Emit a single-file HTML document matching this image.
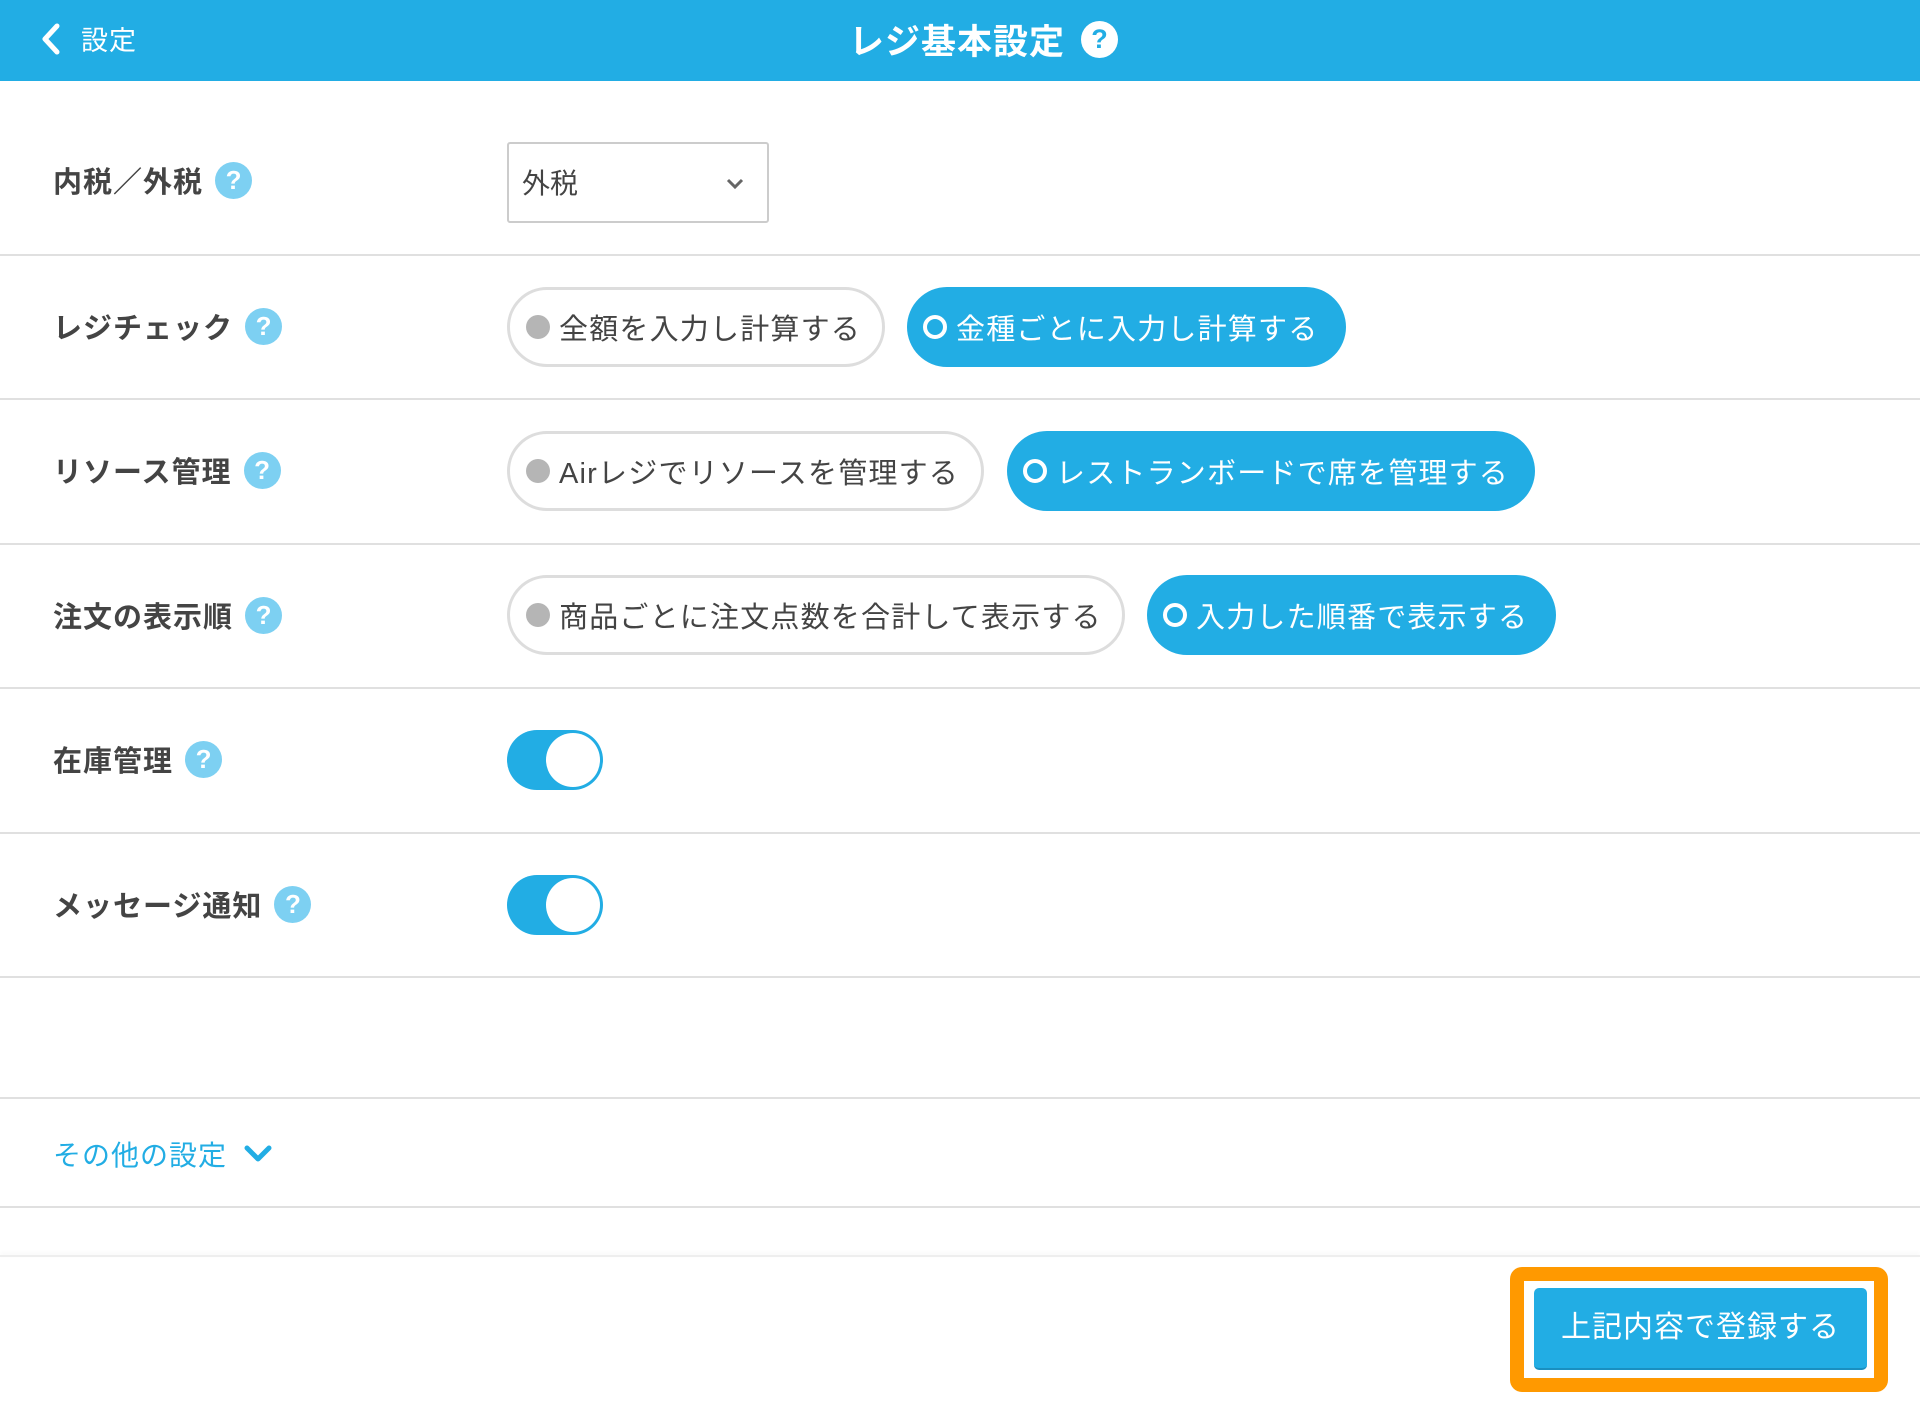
<!DOCTYPE html>
<html><head><meta charset="utf-8"><style>
*{margin:0;padding:0;box-sizing:border-box}
body{width:1920px;height:1401px;background:#fff;font-family:"Liberation Sans","Noto Sans CJK JP",sans-serif;position:relative;overflow:hidden;color:#444}
.hdr{position:absolute;left:0;top:0;width:1920px;height:81px;background:#22ade4;color:#fff}
.row{position:absolute;left:0;width:1920px;border-bottom:2px solid #e0e0e0}
.lbl{position:absolute;left:53px;font-size:29px;font-weight:bold;color:#444;transform:translateY(-50%);display:flex;align-items:center;white-space:nowrap;letter-spacing:1px}
.q{display:inline-block;width:37px;height:37px;border-radius:50%;background:#7dd0f2;color:#fff;font-size:26px;text-align:center;line-height:37px;margin-left:12px;font-weight:bold;letter-spacing:0}
.pill{position:absolute;height:80px;border-radius:40px;font-size:29px;display:flex;align-items:center;padding-left:16px;white-space:nowrap;letter-spacing:1.2px}
.off{border:3px solid #ddd;color:#444;background:#fff}
.on{background:#22ade4;color:#fff}
.dot{width:24px;height:24px;border-radius:50%;margin-right:9px;flex:none}
.off .dot{background:#b5b5b5}
.on .dot{border:4px solid #fff}
.tg{position:absolute;left:507px;width:96px;height:60px;border-radius:30px;background:#22ade4}
.tg::after{content:"";position:absolute;right:3px;top:3px;width:54px;height:54px;border-radius:50%;background:#fff}
</style></head><body>
<div class="hdr">
<svg style="position:absolute;left:40px;top:23px" width="22" height="32" viewBox="0 0 22 32"><path d="M17 3 L5 16 L17 29" stroke="#fff" stroke-width="5" fill="none" stroke-linecap="round" stroke-linejoin="round"/></svg>
<div style="position:absolute;left:81px;top:19px;font-size:27px;letter-spacing:1px">設定</div>
<div style="position:absolute;left:849px;top:14px;font-size:35px;font-weight:bold;display:flex;align-items:center;letter-spacing:1px">レジ基本設定<span style="display:inline-block;width:37px;height:37px;border-radius:50%;background:#fff;color:#22ade4;font-size:27px;line-height:37px;text-align:center;margin-left:16px;letter-spacing:0">?</span></div>
</div>
<div class="row" style="top:81px;height:175px"></div>
<div class="row" style="top:256px;height:144px"></div>
<div class="row" style="top:400px;height:145px"></div>
<div class="row" style="top:545px;height:144px"></div>
<div class="row" style="top:689px;height:145px"></div>
<div class="row" style="top:834px;height:144px"></div>
<div class="row" style="top:978px;height:121px"></div>
<div class="row" style="top:1099px;height:109px"></div>

<div class="lbl" style="top:180px">内税／外税<span class="q">?</span></div>
<div style="position:absolute;left:507px;top:142px;width:262px;height:81px;border:2px solid #ccc;border-radius:3px;font-size:28px;padding:18px 0 0 13px">外税
<svg style="position:absolute;right:22px;top:33px" width="20" height="13" viewBox="0 0 20 13"><path d="M3 3 L10 10 L17 3" stroke="#666" stroke-width="3" fill="none"/></svg></div>

<div class="lbl" style="top:326px">レジチェック<span class="q">?</span></div>
<div class="pill off" style="left:507px;top:287px;width:378px"><span class="dot"></span>全額を入力し計算する</div>
<div class="pill on" style="left:907px;top:287px;width:439px"><span class="dot"></span>金種ごとに入力し計算する</div>

<div class="lbl" style="top:470px">リソース管理<span class="q">?</span></div>
<div class="pill off" style="left:507px;top:431px;width:477px"><span class="dot"></span>Airレジでリソースを管理する</div>
<div class="pill on" style="left:1007px;top:431px;width:528px"><span class="dot"></span>レストランボードで席を管理する</div>

<div class="lbl" style="top:615px">注文の表示順<span class="q">?</span></div>
<div class="pill off" style="left:507px;top:575px;width:618px"><span class="dot"></span>商品ごとに注文点数を合計して表示する</div>
<div class="pill on" style="left:1147px;top:575px;width:409px"><span class="dot"></span>入力した順番で表示する</div>

<div class="lbl" style="top:759px">在庫管理<span class="q">?</span></div>
<div class="tg" style="top:730px"></div>
<div class="lbl" style="top:904px">メッセージ通知<span class="q">?</span></div>
<div class="tg" style="top:875px"></div>

<div style="position:absolute;left:53px;top:1134px;font-size:28px;color:#22ade4;display:flex;align-items:center;letter-spacing:1px">その他の設定
<svg style="margin-left:16px" width="30" height="20" viewBox="0 0 30 20"><path d="M4 4 L15 15 L26 4" stroke="#22ade4" stroke-width="5" fill="none" stroke-linecap="round" stroke-linejoin="round"/></svg></div>

<div style="position:absolute;left:0;top:1255px;width:1920px;height:2px;background:#eee;box-shadow:0 -2px 4px rgba(0,0,0,.05)"></div>
<div style="position:absolute;left:1510px;top:1267px;width:378px;height:125px;border:14px solid #ff9900;border-radius:12px"></div>
<div style="position:absolute;left:1534px;top:1288px;width:333px;height:82px;background:#22ade4;border-radius:5px;border-bottom:2px solid #1a8fc0;color:#fff;font-size:30px;text-align:center;line-height:80px;letter-spacing:1px">上記内容で登録する</div>
</body></html>
